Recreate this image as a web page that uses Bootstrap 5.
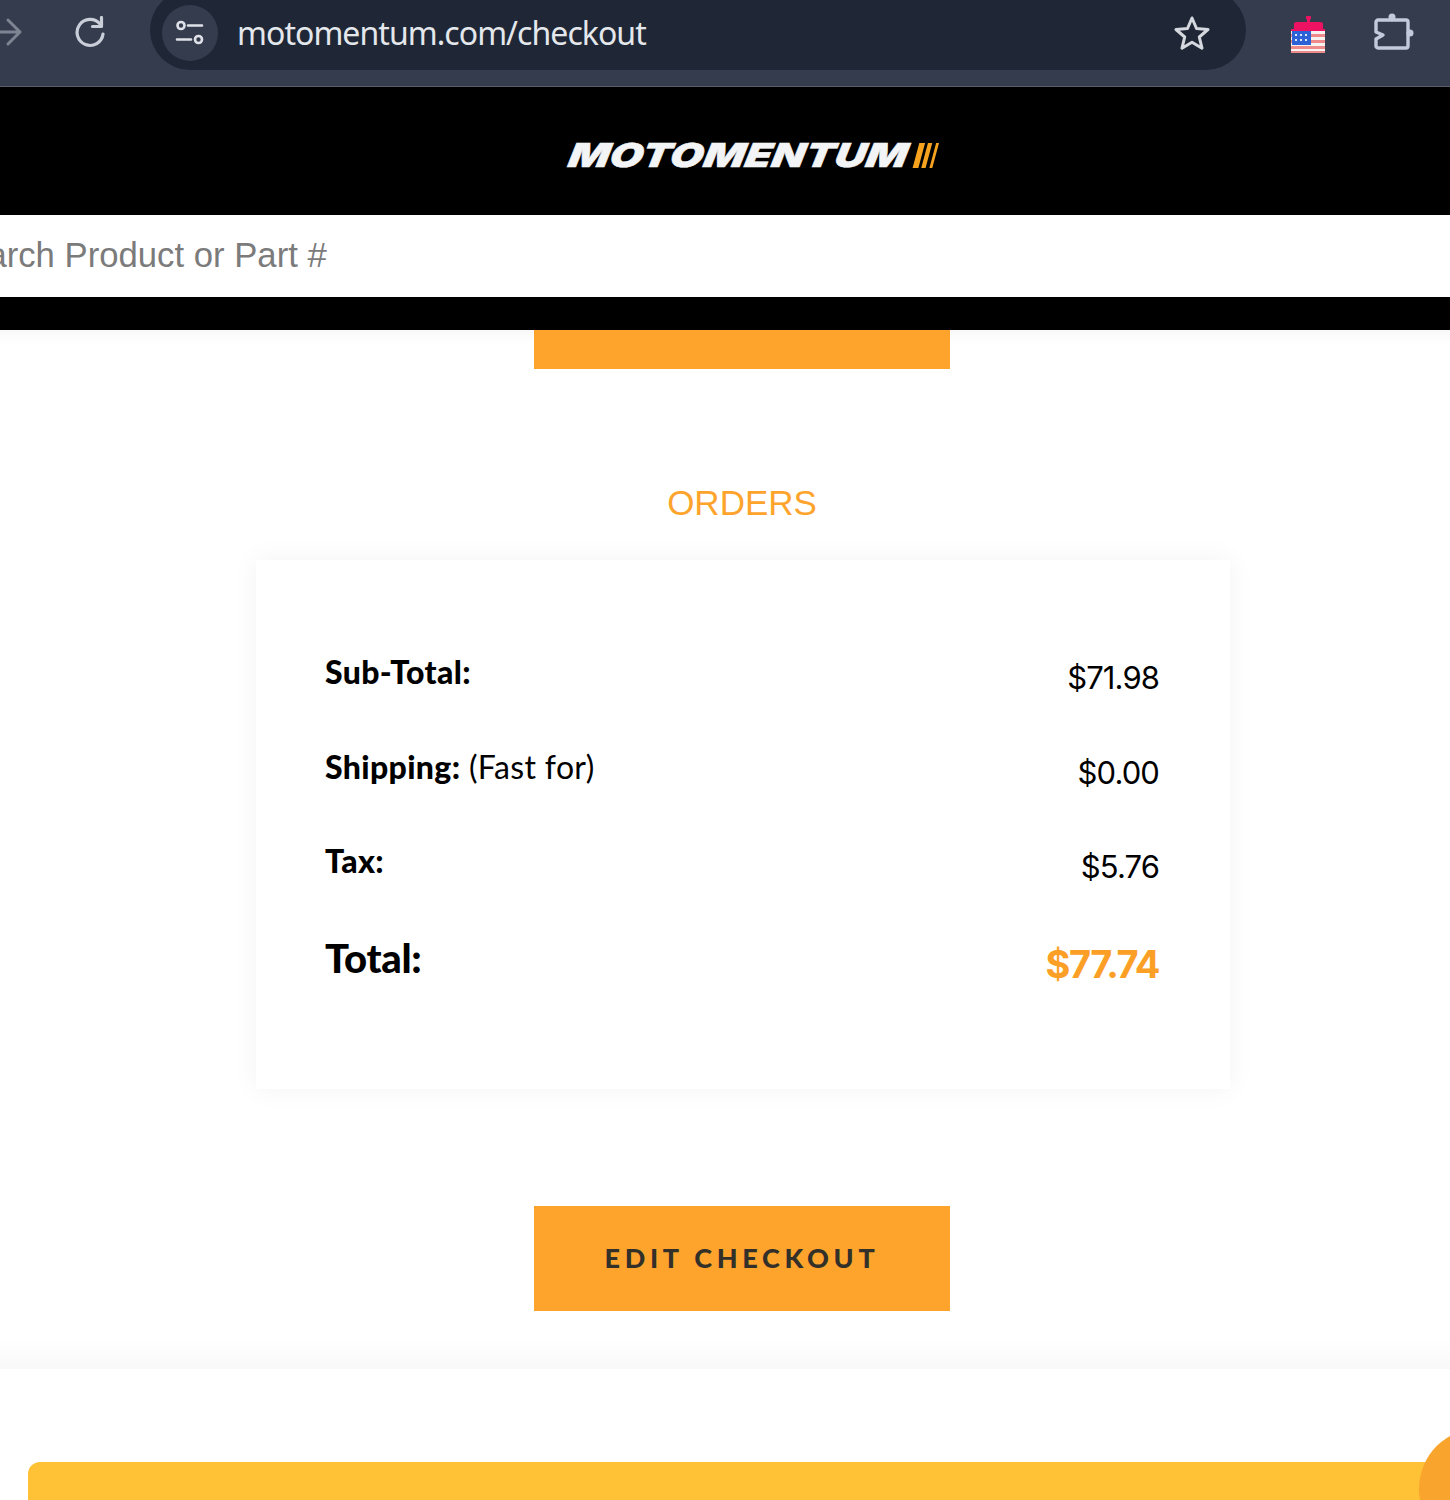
<!DOCTYPE html>
<html lang="en">
  <head>
    <meta charset="UTF-8" />
    <meta name="viewport" content="width=device-width, initial-scale=1.0" />
    <title>Motomentum checkout</title>
    <link href="https://cdn.jsdelivr.net/npm/bootstrap@5.3.0/dist/css/bootstrap.min.css" rel="stylesheet" />
    <style>
      body {
        height: 1500px;
        overflow: hidden;
        background: #fff;
        color: #000;
        font-family: Lato, "Liberation Sans", sans-serif;
      }
      .chrome-bar {
        height: 87px;
        background: #353c4e;
        border-bottom: 1px solid #5a5f6b;
      }
      .chrome-back {
        width: 22px;
        flex-shrink: 0;
      }
      .chrome-reload {
        margin-left: 48px;
        width: 40px;
        flex-shrink: 0;
      }
      .url-pill {
        width: 1096px;
        height: 80px;
        margin-top: -10px;
        margin-left: 40px;
        padding: 6px 36px 0 12px;
        background: #1f2736;
        border-radius: 40px;
        flex-shrink: 0;
      }
      .site-chip {
        width: 56px;
        height: 56px;
        border-radius: 50%;
        background: #353c4e;
      }
      .url-text {
        margin-left: 19px;
        font: 32px/1 "Noto Sans", sans-serif;
        letter-spacing: -0.95px;
        color: #e4e7ec;
      }
      .ext-flag {
        margin-left: 42px;
        width: 40px;
        flex-shrink: 0;
      }
      .ext-puzzle {
        margin-left: 44px;
        margin-top: 12px;
        width: 44px;
        flex-shrink: 0;
      }
      .brand-bar {
        height: 128px;
        background: #000;
        padding-left: 569px;
        padding-top: 8px;
      }
      .brand-name {
        font: italic 900 33px/1 Inter, sans-serif;
        color: #f3f4f5;
        letter-spacing: 0.2px;
        -webkit-text-stroke: 0.5px #f3f4f5;
        transform: scaleX(1.3) skewX(-8deg);
        transform-origin: left center;
      }
      .brand-slashes {
        margin-left: 82px;
      }
      .search-box {
        display: block;
        width: 100%;
        height: 82px;
        border: 0;
        outline: 0;
        background: #fff;
        padding: 0 0 2px;
        text-indent: -55px;
        font: 34.700px/1 "Liberation Sans", sans-serif;
        color: #777;
      }
      .search-box::placeholder {
        color: #7b7b7b;
        opacity: 1;
      }
      .search-foot {
        height: 33px;
        background: #000;
      }
      .page-main {
        height: 1039px;
        background: linear-gradient(#f8f8f8, #fff 14px, #fff 1010px, #f8f8f8);
      }
      .btn-peek {
        width: 416px;
        height: 39px;
        background: #fea42c;
        margin-left: 534px;
      }
      .orders-title {
        width: 416px;
        margin: 116px 0 0 534px;
        font: 35px/1 "Liberation Sans", sans-serif;
        color: #fea42c;
      }
      .order-panel {
        width: 974px;
        height: 529px;
        margin: 40px 0 0 256px;
        padding: 92px 71px 0 69px;
        border: 0;
        border-radius: 0;
        box-shadow: 0 0 26px rgba(0, 0, 0, 0.05);
      }
      .order-line {
        height: 94.5px;
        font-size: 32px;
        line-height: 40px;
        letter-spacing: 0.35px;
      }
      .order-line strong {
        font-weight: 900;
      }
      .order-price {
        font-family: Inter, sans-serif;
        font-size: 31px;
        margin-top: 6px;
        letter-spacing: -0.9px;
      }
      .order-total {
        font-size: 40px;
        line-height: 46px;
        margin-top: -1px;
        letter-spacing: -0.3px;
      }
      .order-total .order-price {
        color: #fb9f27;
        font-size: 38px;
        font-weight: 700;
        letter-spacing: -1.5px;
        margin-top: 6px;
      }
      .btn-edit {
        display: block;
        width: 416px;
        height: 105px;
        margin: 117px 0 0 534px;
        border: 0;
        border-radius: 0;
        background: #fea42c;
        color: #33302a;
        font: 900 27px/1 Lato, sans-serif;
        letter-spacing: 4.700px;
        padding: 0 0 3px;
      }
      .promo-strip {
        height: 60px;
        margin: 93px 0 0 28px;
        background: #ffc136;
        border-radius: 12px 0 0 0;
      }
      .chat-bubble {
        position: absolute;
        left: 1419px;
        top: 1428px;
        width: 31px;
        height: 72px;
        background: #f9a42c;
        clip-path: circle(61px at 61px 61px);
      }
    </style>
  </head>
  <body>
    <div class="chrome-bar d-flex align-items-start overflow-hidden">
      <svg class="chrome-back mt-3" viewBox="10 0 22 32" height="32" fill="none" stroke="#7e8492" stroke-width="3" stroke-linecap="round" stroke-linejoin="round">
        <path d="M1 16h28M18 4l12 12-12 12" />
      </svg>
      <svg class="chrome-reload mt-3" viewBox="0 0 32 32" height="32" fill="none" stroke="#c9ced8" stroke-width="3.2" stroke-linecap="round" stroke-linejoin="round">
        <path d="M26 8a13 13 0 1 0 3 10" />
        <path d="M27.500 1.500v9h-9" />
      </svg>
      <div class="url-pill d-flex align-items-center">
        <span class="site-chip d-flex align-items-center justify-content-center flex-shrink-0">
          <svg viewBox="0 0 32 32" width="32" height="32" fill="none" stroke="#dfe2e8" stroke-width="2.600" stroke-linecap="round">
            <circle cx="7" cy="8.500" r="3.500" />
            <path d="M14 8.500h14M3 22.500h14" />
            <circle cx="24.500" cy="22.500" r="3.500" />
          </svg>
        </span>
        <span class="url-text">motomentum.com/checkout</span>
        <svg class="ms-auto" viewBox="0 0 36 36" width="36" height="36" fill="none" stroke="#d5d8df" stroke-width="3" stroke-linejoin="round">
          <path d="M18 3l4.500 10.500 11.500 1-8.700 7.500 2.700 11.200L18 27.300 8 33.200l2.700-11.200L2 14.500l11.500-1z" />
        </svg>
      </div>
      <svg class="ext-flag mt-3" viewBox="0 0 40 40" height="40">
        <rect x="19" y="0" width="3" height="7" fill="#ee1262" />
        <circle cx="20.500" cy="1.500" r="2.500" fill="#ee1262" />
        <path d="M6 8q0-2 3-2h23q3 0 3 2v5h2v8H3v-8h3z" fill="#ee1262" />
        <rect x="3" y="15" width="34" height="22" fill="#f6f3f1" />
        <path d="M3 18h34v3H3zM3 24h34v3H3zM3 30h34v3H3zM3 35h34v2H3z" fill="#ef8a8b" />
        <rect x="4" y="15" width="19" height="14" fill="#2d62d6" />
        <path d="M7 18h2v2H7zM12 18h2v2h-2zM17 18h2v2h-2zM7 23h2v2H7zM12 23h2v2h-2zM17 23h2v2h-2z" fill="#dfe8fb" />
      </svg>
      <svg class="ext-puzzle" viewBox="0 -4 44 40" height="40" fill="none" stroke="#c3cadb" stroke-width="3.400" stroke-linejoin="round">
        <path d="M6 4h28a2 2 0 0 1 2 2v24a2 2 0 0 1-2 2H6a2 2 0 0 1-2-2v-7l7-4-7-3V6a2 2 0 0 1 2-2z" />
        <circle cx="20" cy="1" r="3.500" fill="#c3cadb" stroke="none" />
        <circle cx="38" cy="17" r="3.500" fill="#c3cadb" stroke="none" />
      </svg>
    </div>

    <header class="brand-bar d-flex align-items-center">
      <span class="brand-name">MOTOMENTUM</span>
      <svg class="brand-slashes" viewBox="0 0 30 26" width="30" height="25" fill="#f6a21f">
        <path d="M7 0h6L6 26H0zM16 0h4.500l-7 26H9zM24.500 0h3l-7 26h-3z" />
      </svg>
    </header>

    <input class="search-box" type="text" placeholder="Search Product or Part #" />
    <div class="search-foot"></div>

    <main class="page-main">
      <div class="btn-peek"></div>
      <h2 class="orders-title text-center mb-0">ORDERS</h2>
      <section class="order-panel card">
        <div class="order-line d-flex justify-content-between">
          <span><strong>Sub-Total:</strong></span>
          <span class="order-price">$71.98</span>
        </div>
        <div class="order-line d-flex justify-content-between">
          <span><strong>Shipping:</strong> (Fast for)</span>
          <span class="order-price">$0.00</span>
        </div>
        <div class="order-line d-flex justify-content-between">
          <span><strong>Tax:</strong></span>
          <span class="order-price">$5.76</span>
        </div>
        <div class="order-line order-total d-flex justify-content-between">
          <span><strong>Total:</strong></span>
          <span class="order-price">$77.74</span>
        </div>
      </section>
      <button class="btn btn-edit" type="button">EDIT CHECKOUT</button>
    </main>

    <div class="promo-strip"></div>
    <div class="chat-bubble"></div>

    <script src="https://cdn.jsdelivr.net/npm/bootstrap@5.3.0/dist/js/bootstrap.bundle.min.js"></script>
  </body>
</html>
